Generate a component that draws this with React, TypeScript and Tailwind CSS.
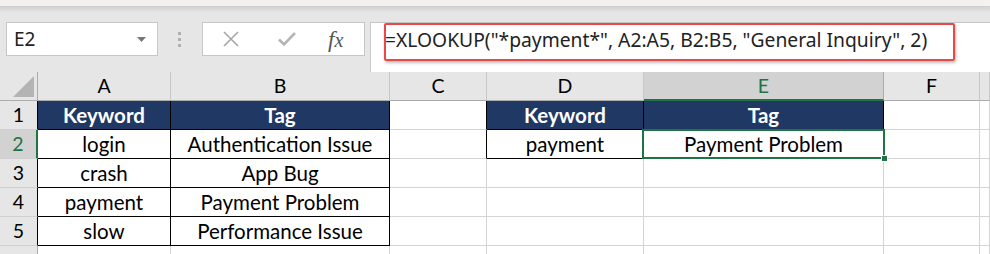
import React from 'react';

const GREEN = '#217346';

type Row = { num: number; cells: Record<string, string> };

const columns = [
  { key: 'A', width: 'w-[133px]' },
  { key: 'B', width: 'w-[219px]' },
  { key: 'C', width: 'w-[97px]' },
  { key: 'D', width: 'w-[157px]' },
  { key: 'E', width: 'w-[240px]' },
  { key: 'F', width: 'w-[96px]' },
  { key: 'G', width: 'flex-1' },
];

const rows: Row[] = [
  { num: 1, cells: { A: 'Keyword', B: 'Tag', D: 'Keyword', E: 'Tag' } },
  { num: 2, cells: { A: 'login', B: 'Authentication Issue', D: 'payment', E: 'Payment Problem' } },
  { num: 3, cells: { A: 'crash', B: 'App Bug' } },
  { num: 4, cells: { A: 'payment', B: 'Payment Problem' } },
  { num: 5, cells: { A: 'slow', B: 'Performance Issue' } },
  { num: 6, cells: {} },
];

// which cells belong to a bordered table
const inTable = (col: string, row: number) =>
  ((col === 'A' || col === 'B') && row >= 1 && row <= 5) ||
  ((col === 'D' || col === 'E') && row >= 1 && row <= 2);

const nextCol = (col: string) => String.fromCharCode(col.charCodeAt(0) + 1);

const NameBox = () => (
  <div className="w-[152px] h-[34px] bg-white border border-[#c6c6c6] flex items-center justify-between pl-[7px] pr-[11px]">
    <span className="text-[19px] text-[#222] font-['Noto_Sans',sans-serif]">E2</span>
    <svg width="9" height="5" viewBox="0 0 9 5">
      <path d="M0 0h9L4.5 5z" fill="#777" />
    </svg>
  </div>
);

const FormulaButtons = () => (
  <div className="w-[163px] h-[34px] bg-white border border-[#c6c6c6] flex items-center">
    <svg className="ml-[19px]" width="18" height="18" viewBox="0 0 18 18">
      <path d="M2 2l14 14M16 2L2 16" stroke="#a6a6a6" strokeWidth="1.6" />
    </svg>
    <svg className="ml-[37px]" width="20" height="16" viewBox="0 0 20 16">
      <path d="M2 8.5l5 5L18 2" stroke="#b4b4b4" strokeWidth="2.6" fill="none" />
    </svg>
    <span className="ml-[31px] text-[23px] italic text-[#555] font-['Liberation_Serif',serif] leading-none">
      f<span className="text-[20px]">x</span>
    </span>
  </div>
);

export default function App() {
  return (
    <div className="relative w-[990px] h-[254px] overflow-hidden bg-white">
      {/* top ribbon strip */}
      <div className="h-[6px] bg-[#f3f2f1]" />
      <div className="h-[6px] bg-gradient-to-b from-[#cfcfcf] to-[#e4e4e4]" />

      {/* formula bar */}
      <div className="h-[60px] bg-[#e6e6e6] flex items-start pt-[10px] pl-[6px]">
        <NameBox />
        <div className="ml-[20px] mt-[10px] flex flex-col gap-[3px]">
          <div className="w-[3px] h-[3px] bg-[#b0b0b0]" />
          <div className="w-[3px] h-[3px] bg-[#b0b0b0]" />
          <div className="w-[3px] h-[3px] bg-[#b0b0b0]" />
        </div>
        <div className="ml-[21px]">
          <FormulaButtons />
        </div>
        <div className="ml-[5px] flex-1 h-[50px] bg-white border-l border-t border-[#c6c6c6] pl-[14px] pt-[3px]">
          <span className="text-[19.3px] text-[#222] font-['Noto_Sans',sans-serif] whitespace-nowrap">
            =XLOOKUP("*payment*", A2:A5, B2:B5, "General Inquiry", 2)
          </span>
        </div>
      </div>

      {/* red annotation box */}
      <div className="absolute left-[384px] top-[23px] w-[571px] h-[38px] border-2 border-[#ea4747] rounded-[2px] shadow-[1px_2px_3px_rgba(0,0,0,0.25)]" />

      {/* sheet */}
      <div className="font-['Lato',sans-serif] text-black">
        {/* column headers */}
        <div className="flex h-[29px] bg-[#e6e6e6]">
          <div className="w-[38px] h-full border-r border-b border-[#ababab] flex items-end justify-end pr-[3px] pb-[3px]">
            <svg width="21" height="21" viewBox="0 0 21 21">
              <path d="M21 0v21H0z" fill="#b4b4b4" />
            </svg>
          </div>
          {columns.map((c) => (
            <div
              key={c.key}
              className={`${c.width} h-full flex items-center justify-center text-[19.5px] ${
                c.key === 'E'
                  ? 'bg-[#d2d2d2] text-[#217346] border-b-2 border-b-[#217346] border-r border-r-[#ababab]'
                  : 'border-r border-r-[#c8c8c8] border-b border-b-[#ababab]'
              }`}
            >
              {c.key === 'G' ? '' : c.key}
            </div>
          ))}
        </div>

        {rows.map((r) => (
          <div key={r.num} className="flex h-[29px]">
            <div
              className={`w-[38px] h-full flex items-center justify-center text-[19.5px] border-b border-b-[#d0d0d0] ${
                r.num === 2
                  ? 'bg-[#d2d2d2] text-[#217346] border-r-2 border-r-[#217346]'
                  : r.num <= 5
                  ? 'bg-[#e6e6e6] border-r border-r-[#000]'
                  : 'bg-[#e6e6e6] border-r border-r-[#ababab]'
              }`}
            >
              {r.num <= 5 ? r.num : ''}
            </div>
            {columns.map((c) => {
              const text = r.cells[c.key];
              const header = r.num === 1 && inTable(c.key, 1);
              const rightDark = inTable(c.key, r.num) || inTable(nextCol(c.key), r.num);
              const bottomDark = inTable(c.key, r.num) || inTable(c.key, r.num + 1);
              return (
                <div
                  key={c.key}
                  className={`${c.width} h-full flex items-center justify-center text-[20.5px] border-r border-b ${
                    rightDark ? 'border-r-black' : 'border-r-[#d4d4d4]'
                  } ${bottomDark ? 'border-b-black' : 'border-b-[#d4d4d4]'} ${
                    header ? 'bg-[#203864] text-white font-bold' : ''
                  }`}
                >
                  {text}
                </div>
              );
            })}
          </div>
        ))}
      </div>

      {/* active cell E2 */}
      <div
        className="absolute left-[642px] top-[129px] w-[243px] h-[30px] border-2"
        style={{ borderColor: GREEN }}
      >
        <div className="absolute -right-[5px] -bottom-[5px] w-[7px] h-[7px] bg-[#217346] border border-white" />
      </div>
    </div>
  );
}
